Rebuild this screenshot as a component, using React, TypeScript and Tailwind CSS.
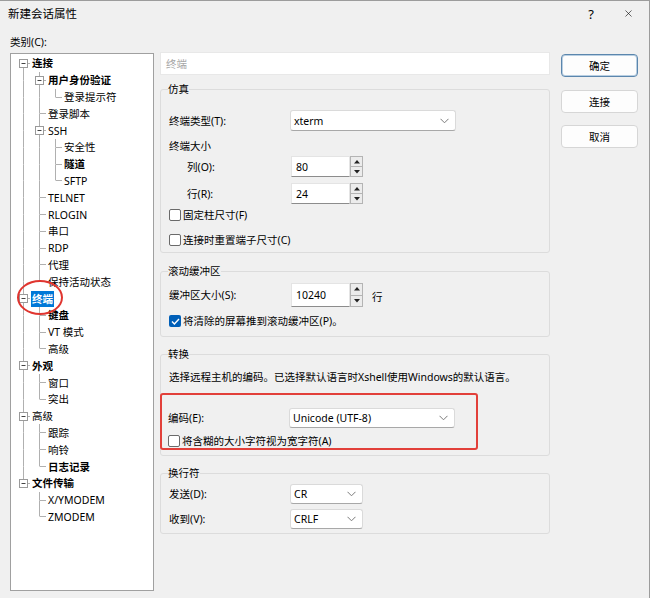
import { X } from "lucide-react";

type Cell = "pipe" | "tee" | "ell" | "blank" | "expDown" | "expMid" | "expUp";

type Row = { label: string; cells: Cell[]; bold?: boolean; selected?: boolean };

const rows: Row[] = [
  { label: "连接", cells: ["expDown"], bold: true },
  { label: "用户身份验证", cells: ["pipe", "expMid"], bold: true },
  { label: "登录提示符", cells: ["pipe", "pipe", "ell"] },
  { label: "登录脚本", cells: ["pipe", "tee"] },
  { label: "SSH", cells: ["pipe", "expMid"] },
  { label: "安全性", cells: ["pipe", "pipe", "tee"] },
  { label: "隧道", cells: ["pipe", "pipe", "tee"], bold: true },
  { label: "SFTP", cells: ["pipe", "pipe", "ell"] },
  { label: "TELNET", cells: ["pipe", "tee"] },
  { label: "RLOGIN", cells: ["pipe", "tee"] },
  { label: "串口", cells: ["pipe", "tee"] },
  { label: "RDP", cells: ["pipe", "tee"] },
  { label: "代理", cells: ["pipe", "tee"] },
  { label: "保持活动状态", cells: ["pipe", "ell"] },
  { label: "终端", cells: ["expMid"], bold: true, selected: true },
  { label: "键盘", cells: ["pipe", "tee"], bold: true },
  { label: "VT 模式", cells: ["pipe", "tee"] },
  { label: "高级", cells: ["pipe", "ell"] },
  { label: "外观", cells: ["expMid"], bold: true },
  { label: "窗口", cells: ["pipe", "tee"] },
  { label: "突出", cells: ["pipe", "ell"] },
  { label: "高级", cells: ["expMid"] },
  { label: "跟踪", cells: ["pipe", "tee"] },
  { label: "响铃", cells: ["pipe", "tee"] },
  { label: "日志记录", cells: ["pipe", "ell"], bold: true },
  { label: "文件传输", cells: ["expUp"], bold: true },
  { label: "X/YMODEM", cells: ["blank", "tee"] },
  { label: "ZMODEM", cells: ["blank", "ell"] },
];

// tree connector drawn per indent cell
const Connector = ({ type }: { type: Cell }) => {
  const line = { stroke: "#b0b0b0", strokeWidth: 1 };
  const up = type === "pipe" || type === "tee" || type === "ell" || type === "expMid" || type === "expUp";
  const down = type === "pipe" || type === "tee" || type === "expMid" || type === "expDown";
  const isExp = type.startsWith("exp");
  const horiz = type === "tee" || type === "ell";
  return (
    <svg width="16" height="17" viewBox="0 0 16 17" className="shrink-0">
      {up && <line x1="8.5" y1="0" x2="8.5" y2="8.5" {...line} />}
      {down && <line x1="8.5" y1="8.5" x2="8.5" y2="17" {...line} />}
      {horiz && <line x1="9" y1="8.5" x2="15" y2="8.5" {...line} />}
      {isExp && (
        <>
          <line x1="13" y1="8.5" x2="15" y2="8.5" {...line} />
          <rect x="4.5" y="4.5" width="8" height="8" fill="#fff" stroke="#9a9a9a" />
          <line x1="6.5" y1="8.5" x2="10.5" y2="8.5" stroke="#444" />
        </>
      )}
    </svg>
  );
};

const Chevron = () => (
  <svg width="9" height="6" viewBox="0 0 9 6">
    <path d="M0.5 0.8 L4.5 4.8 L8.5 0.8" fill="none" stroke="#7a7a7a" strokeWidth="1" />
  </svg>
);

const Select = ({ value, wide }: { value: string; wide?: boolean }) => (
  <div
    className={`flex h-full items-center justify-between rounded-[3px] border border-[#dadada] border-b-[#a8a8a8] bg-white pl-[3px] pr-[6px] ${
      wide ? "w-[166px]" : "w-[73px]"
    }`}
  >
    <span>{value}</span>
    <Chevron />
  </div>
);

const Tri = ({ down }: { down?: boolean }) => (
  <svg width="6" height="4" viewBox="0 0 6 4">
    <path d={down ? "M0 0 L6 0 L3 3.5 Z" : "M0 3.5 L6 3.5 L3 0 Z"} fill="#222" />
  </svg>
);

const SpinBox = ({ value }: { value: string }) => (
  <div className="flex h-full">
    <div className="flex w-[59px] items-center border border-[#e4e4e4] border-b-[#8c8c8c] bg-white pl-[4px]">{value}</div>
    <div className="flex w-[13px] flex-col">
      <div className="flex flex-1 items-center justify-center border border-[#b4b4b4] bg-[#ececec]">
        <Tri />
      </div>
      <div className="flex flex-1 items-center justify-center border border-t-0 border-[#b4b4b4] bg-[#ececec]">
        <Tri down />
      </div>
    </div>
  </div>
);

const Check = ({ label, checked, className }: { label: string; checked?: boolean; className: string }) => (
  <div className={`flex items-center gap-[2px] pl-[1px] ${className}`}>
    {checked ? (
      <span className="flex h-[12px] w-[12px] items-center justify-center rounded-[2px] bg-[#005fb8]">
        <svg width="9" height="7" viewBox="0 0 9 7">
          <path d="M1 3.6 L3.4 6 L8 1" fill="none" stroke="#fff" strokeWidth="1.4" />
        </svg>
      </span>
    ) : (
      <span className="h-[12px] w-[12px] rounded-[2px] border border-[#6a6a6a] bg-white" />
    )}
    <span>{label}</span>
  </div>
);

const Button = ({ label, primary, className }: { label: string; primary?: boolean; className?: string }) => (
  <div
    className={`flex h-[23px] items-center justify-center rounded-[4px] bg-[#fdfdfd] ${
      primary ? "border border-[#5b86ad] shadow-[inset_0_0_0_1px_#b9cfe2]" : "border border-[#d6d6d6]"
    } ${className ?? ""}`}
  >
    {label}
  </div>
);

export default function App() {
  return (
    <div className="h-[598px] w-[650px] overflow-hidden border-t border-r border-[#9c9c9c] bg-[#f0f0f0] font-['Noto_Sans','Noto_Sans_CJK_SC',sans-serif] text-[10.5px] leading-[16px] text-black">
      {/* Title bar */}
      <div className="flex h-[25px] items-center justify-between pl-[8px] pr-[15px]">
        <span className="text-[11.5px]">新建会话属性</span>
        <div className="flex items-center gap-[29px]">
          <span className="text-[13px]">?</span>
          <X className="h-[11px] w-[11px]" strokeWidth={1.3} />
        </div>
      </div>

      <div className="flex">
        {/* Category tree */}
        <div className="ml-[10px] w-[144px]">
          <div className="flex h-[27px] items-center pt-[4px]">类别(C):</div>
          <div className="relative h-[538px] border border-[#a0a0a0] bg-white pl-[4px] pt-[1px]">
            {rows.map((r, i) => (
              <div key={i} className="flex h-[16.8px] items-center">
                {r.cells.map((c, j) => (
                  <Connector key={j} type={c} />
                ))}
                <span
                  className={`px-[1px] leading-[16px] whitespace-nowrap ${r.bold ? "font-bold" : ""} ${
                    r.selected ? "bg-[#0078d7] text-white" : ""
                  }`}
                >
                  {r.label}
                </span>
              </div>
            ))}
            <div className="absolute left-[6px] top-[226px] h-[35px] w-[46px] rounded-[50%] border-2 border-[#e0352f]" />
          </div>
        </div>

        {/* Settings */}
        <div className="ml-[6px] w-[390px] pt-[26px]">
          <div className="flex h-[23px] items-center border border-[#e8e8e8] bg-white pl-[5px] text-[#a6a6a6]">终端</div>

          <fieldset className="mt-[6px] rounded-[3px] border border-[#dcdcdc] px-[7px] pb-[4px]">
            <legend className="leading-[16px]">仿真</legend>
            <div className="pl-[1px]">
              <div className="mt-[13px] flex h-[21px] items-center">
                <span className="w-[121px]">终端类型(T):</span>
                <Select value="xterm" wide />
              </div>
              <div className="mt-[7px] flex h-[16px] items-center">终端大小</div>
              <div className="mt-[2px] flex h-[21px] items-center">
                <span className="w-[122px] pl-[18px]">列(O):</span>
                <SpinBox value="80" />
              </div>
              <div className="mt-[6px] flex h-[21px] items-center">
                <span className="w-[122px] pl-[18px]">行(R):</span>
                <SpinBox value="24" />
              </div>
            </div>
            <Check label="固定柱尺寸(F)" className="mt-[3px] h-[16px]" />
            <Check label="连接时重置端子尺寸(C)" className="mt-[9px] h-[16px]" />
          </fieldset>

          <fieldset className="mt-[10px] rounded-[3px] border border-[#dcdcdc] px-[7px] pb-[7px]">
            <legend className="leading-[16px]">滚动缓冲区</legend>
            <div className="mt-[4px] flex h-[24px] items-center pl-[1px]">
              <span className="w-[122px]">缓冲区大小(S):</span>
              <SpinBox value="10240" />
              <span className="ml-[9px] mt-[3px]">行</span>
            </div>
            <Check label="将清除的屏幕推到滚动缓冲区(P)。" checked className="mt-[6px] h-[16px]" />
          </fieldset>

          <fieldset className="mt-[9px] rounded-[3px] border border-[#dcdcdc] px-[7px] pb-[5px]">
            <legend className="leading-[16px]">转换</legend>
            <div className="mt-[7px] flex h-[16px] items-center whitespace-nowrap pl-[1px]">
              选择远程主机的编码。已选择默认语言时Xshell使用Windows的默认语言。
            </div>
            <div className="-ml-[8px] mt-[8px] w-[318px] rounded-[3px] border-2 border-[#e2403a] pl-[6px]">
              <div className="mt-[13px] flex h-[20px] items-center">
                <span className="w-[121px]">编码(E):</span>
                <Select value="Unicode (UTF-8)" wide />
              </div>
              <Check label="将含糊的大小字符视为宽字符(A)" className="-ml-[1px] mt-[6px] h-[14px]" />
            </div>
          </fieldset>

          <fieldset className="mt-[9px] rounded-[3px] border border-[#dcdcdc] px-[7px] pb-[4px]">
            <legend className="leading-[16px]">换行符</legend>
            <div className="pl-[1px]">
              <div className="mt-[3px] flex h-[20px] items-center">
                <span className="w-[121px]">发送(D):</span>
                <Select value="CR" />
              </div>
              <div className="mt-[5px] flex h-[20px] items-center">
                <span className="w-[121px]">收到(V):</span>
                <Select value="CRLF" />
              </div>
            </div>
          </fieldset>
        </div>

        {/* Buttons */}
        <div className="ml-[11px] w-[77px] pt-[28px]">
          <Button label="确定" primary />
          <Button label="连接" className="mt-[13px]" />
          <Button label="取消" className="mt-[12px]" />
        </div>
      </div>
    </div>
  );
}
